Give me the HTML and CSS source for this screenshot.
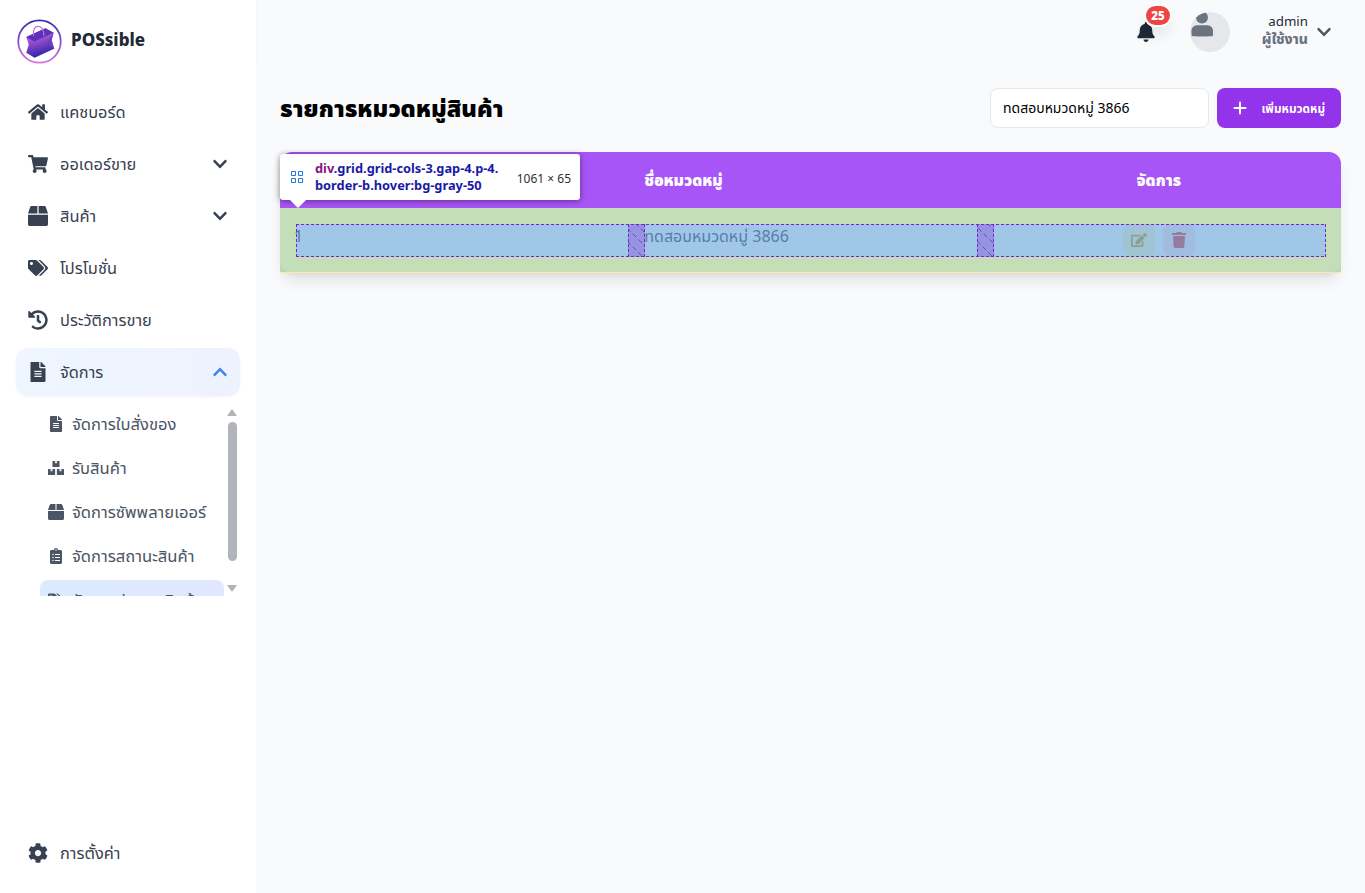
FILE: index.html
```html
<!DOCTYPE html>
<html lang="th">
<head>
<meta charset="utf-8">
<title>POSsible</title>
<link rel="stylesheet" href="styles.css">
</head>
<body>
<svg class="sprite" aria-hidden="true">
  <symbol id="home" viewBox="0 0 576 512"><path d="M280.37 148.26L96 300.11V464a16 16 0 0 0 16 16l112.06-.29a16 16 0 0 0 15.92-16V368a16 16 0 0 1 16-16h64a16 16 0 0 1 16 16v95.64a16 16 0 0 0 16 16.05L464 480a16 16 0 0 0 16-16V300L295.67 148.26a12.19 12.19 0 0 0-15.3 0zM571.6 251.47L488 182.56V44.05a12 12 0 0 0-12-12h-56a12 12 0 0 0-12 12v72.61L318.47 43a48 48 0 0 0-61 0L4.34 251.47a12 12 0 0 0-1.6 16.9l25.5 31A12 12 0 0 0 45.15 301l235.22-193.74a12.19 12.19 0 0 1 15.3 0L530.9 301a12 12 0 0 0 16.9-1.6l25.5-31a12 12 0 0 0-1.7-16.93z"/></symbol>
  <symbol id="cart" viewBox="0 0 576 512"><path d="M528.12 301.319l47.273-208C578.806 78.301 567.391 64 551.99 64H159.208l-9.166-44.81C147.758 8.021 137.93 0 126.529 0H24C10.745 0 0 10.745 0 24v16c0 13.255 10.745 24 24 24h69.883l70.248 343.435C147.325 417.1 136 435.222 136 456c0 30.928 25.072 56 56 56s56-25.072 56-56c0-15.674-6.447-29.835-16.824-40h209.647C430.447 426.165 424 440.326 424 456c0 30.928 25.072 56 56 56s56-25.072 56-56c0-22.172-12.888-41.332-31.579-50.405l5.517-24.276c3.413-15.018-8.002-29.319-23.403-29.319H218.117l-6.545-32h293.145c11.206 0 20.92-7.754 23.403-18.681z"/></symbol>
  <symbol id="box" viewBox="0 0 512 512"><path d="M509.5 184.6L458.9 32.8C452.4 13.2 434.1 0 413.4 0H272v192h238.7c-.4-2.5-.4-5-1.2-7.4zM240 0H98.6c-20.7 0-39 13.2-45.5 32.8L2.5 184.6c-.8 2.4-.8 4.9-1.2 7.4H240V0zM0 224v240c0 26.5 21.5 48 48 48h416c26.5 0 48-21.5 48-48V224H0z"/></symbol>
  <symbol id="tags" viewBox="0 0 640 512"><path d="M497.941 225.941L286.059 14.059A48 48 0 0 0 252.118 0H48C21.49 0 0 21.49 0 48v204.118a48 48 0 0 0 14.059 33.941l211.882 211.882c18.744 18.745 49.136 18.746 67.882 0l204.118-204.118c18.745-18.745 18.745-49.137 0-67.882zM112 160c-26.51 0-48-21.49-48-48s21.49-48 48-48 48 21.49 48 48-21.49 48-48 48zm513.941 133.823L421.823 497.941c-18.745 18.745-49.137 18.745-67.882 0l-.36-.36L527.64 323.522c16.999-16.999 26.36-39.6 26.36-63.64s-9.362-46.641-26.36-63.64L331.397 0h48.721a48 48 0 0 1 33.941 14.059l211.882 211.882c18.745 18.745 18.745 49.137 0 67.882z"/></symbol>
  <symbol id="history" viewBox="0 0 512 512"><path d="M504 255.531c.253 136.64-111.18 248.372-247.82 248.468-59.015.042-113.223-20.53-155.822-54.911-11.077-8.94-11.905-25.541-1.839-35.607l11.267-11.267c8.609-8.609 22.353-9.551 31.891-1.984C173.062 425.135 212.781 440 256 440c101.705 0 184-82.311 184-184 0-101.705-82.311-184-184-184-48.814 0-93.149 18.969-126.068 49.932l50.754 50.754c10.08 10.08 2.941 27.314-11.313 27.314H24c-8.837 0-16-7.163-16-16V38.627c0-14.254 17.234-21.393 27.314-11.314l49.372 49.372C129.209 34.136 189.552 8 256 8c136.81 0 247.747 110.78 248 247.531zm-180.912 78.784l9.823-12.63c8.138-10.463 6.253-25.542-4.21-33.679L288 256.349V152c0-13.255-10.745-24-24-24h-16c-13.255 0-24 10.745-24 24v135.651l65.409 50.874c10.463 8.137 25.541 6.253 33.679-4.21z"/></symbol>
  <symbol id="file" viewBox="0 0 384 512"><path d="M224 136V0H24C10.7 0 0 10.7 0 24v464c0 13.3 10.7 24 24 24h336c13.3 0 24-10.7 24-24V160H248c-13.2 0-24-10.8-24-24zm64 236c0 6.6-5.4 12-12 12H108c-6.6 0-12-5.4-12-12v-8c0-6.6 5.4-12 12-12h168c6.6 0 12 5.4 12 12v8zm0-64c0 6.6-5.4 12-12 12H108c-6.6 0-12-5.4-12-12v-8c0-6.6 5.4-12 12-12h168c6.6 0 12 5.4 12 12v8zm0-72v8c0 6.6-5.4 12-12 12H108c-6.6 0-12-5.4-12-12v-8c0-6.6 5.4-12 12-12h168c6.6 0 12 5.4 12 12zm96-114.1v6.1H256V0h6.1c6.4 0 12.5 2.5 17 7l97.9 98c4.5 4.5 7 10.6 7 16.9z"/></symbol>
  <symbol id="boxes" viewBox="0 0 576 512"><path d="M560 288h-80v96l-32-21.3-32 21.3v-96h-80c-8.8 0-16 7.2-16 16v192c0 8.8 7.2 16 16 16h224c8.8 0 16-7.2 16-16V304c0-8.8-7.2-16-16-16zm-384-64h224c8.8 0 16-7.2 16-16V16c0-8.8-7.2-16-16-16h-80v96l-32-21.3L256 96V0h-80c-8.8 0-16 7.2-16 16v192c0 8.8 7.2 16 16 16zm64 64h-80v96l-32-21.3L96 384v-96H16c-8.8 0-16 7.2-16 16v192c0 8.8 7.2 16 16 16h224c8.8 0 16-7.2 16-16V304c0-8.8-7.2-16-16-16z"/></symbol>
  <symbol id="clipboard" viewBox="0 0 384 512"><path fill-rule="evenodd" d="M336 64h-80c0-35.3-28.7-64-64-64s-64 28.7-64 64H48C21.5 64 0 85.5 0 112v352c0 26.5 21.5 48 48 48h288c26.5 0 48-21.5 48-48V112c0-26.5-21.5-48-48-48zM96 424a24 24 0 1 1 0-48 24 24 0 0 1 0 48zm0-96a24 24 0 1 1 0-48 24 24 0 0 1 0 48zm0-96a24 24 0 1 1 0-48 24 24 0 0 1 0 48zm96-192a24 24 0 1 1 0 48 24 24 0 0 1 0-48zm-32 344h160v32H160zm0-96h160v32H160zm0-96h160v32H160z"/></symbol>
  <symbol id="cog" viewBox="0 0 512 512"><path d="M487.4 315.7l-42.6-24.6c4.3-23.2 4.3-47 0-70.2l42.6-24.6c4.9-2.8 7.1-8.6 5.5-14-11.1-35.6-30-67.8-54.7-94.6-3.8-4.1-10-5.1-14.8-2.3L380.8 110c-17.9-15.4-38.5-27.3-60.8-35.1V25.8c0-5.6-3.9-10.5-9.4-11.7-36.7-8.2-74.3-7.8-109.2 0-5.5 1.2-9.4 6.1-9.4 11.7V75c-22.2 7.9-42.8 19.8-60.8 35.1L88.7 85.5c-4.9-2.8-11-1.9-14.8 2.3-24.7 26.7-43.6 58.9-54.7 94.6-1.7 5.4.6 11.2 5.5 14L67.3 221c-4.3 23.2-4.3 47 0 70.2l-42.6 24.6c-4.9 2.8-7.1 8.6-5.5 14 11.1 35.6 30 67.8 54.7 94.6 3.8 4.1 10 5.1 14.8 2.3l42.6-24.6c17.9 15.4 38.5 27.3 60.8 35.1v49.2c0 5.6 3.9 10.5 9.4 11.7 36.7 8.2 74.3 7.8 109.2 0 5.5-1.2 9.4-6.1 9.4-11.7v-49.2c22.2-7.9 42.8-19.8 60.8-35.1l42.6 24.6c4.9 2.8 11 1.9 14.8-2.3 24.7-26.7 43.6-58.9 54.7-94.6 1.5-5.5-.7-11.3-5.6-14.1zM256 336c-44.1 0-80-35.9-80-80s35.9-80 80-80 80 35.9 80 80-35.9 80-80 80z"/></symbol>
  <symbol id="bell" viewBox="0 0 448 512"><path d="M224 512c35.32 0 63.97-28.65 63.97-64H160.03c0 35.35 28.65 64 63.97 64zm215.39-149.71c-19.32-20.76-55.47-51.99-55.47-154.29 0-77.7-54.48-139.9-127.94-155.16V32c0-17.67-14.32-32-31.98-32s-31.98 14.33-31.98 32v20.84C118.56 68.1 64.08 130.3 64.08 208c0 102.3-36.15 133.53-55.47 154.29-6 6.45-8.66 14.16-8.61 21.71.11 16.4 12.98 32 32.1 32h383.8c19.12 0 32-15.6 32.1-32 .05-7.55-2.61-15.27-8.61-21.71z"/></symbol>
  <symbol id="chevron" viewBox="0 0 448 512"><path d="M207.029 381.476L12.686 187.132c-9.373-9.373-9.373-24.569 0-33.941l22.667-22.667c9.357-9.357 24.522-9.375 33.901-.04L224 284.505l154.745-154.021c9.379-9.335 24.544-9.317 33.901.04l22.667 22.667c9.373 9.373 9.373 24.569 0 33.941L240.971 381.476c-9.373 9.372-24.569 9.372-33.942 0z"/></symbol>
  <symbol id="edit" viewBox="0 0 576 512"><path d="M402.6 83.2l90.2 90.2c3.8 3.8 3.8 10 0 13.8L274.4 405.6l-92.8 10.3c-12.4 1.4-22.9-9.1-21.5-21.5l10.3-92.8L388.8 83.2c3.8-3.8 10-3.8 13.8 0zm162-22.9l-48.8-48.8c-15.2-15.2-39.9-15.2-55.2 0l-35.4 35.4c-3.8 3.8-3.8 10 0 13.8l90.2 90.2c3.8 3.8 10 3.8 13.8 0l35.4-35.4c15.2-15.3 15.2-40 0-55.2zM384 346.2V448H64V128h229.8c3.2 0 6.2-1.3 8.5-3.5l40-40c7.6-7.6 2.2-20.5-8.5-20.5H48C21.5 64 0 85.5 0 112v352c0 26.5 21.5 48 48 48h352c26.5 0 48-21.5 48-48V306.2c0-10.7-12.9-16-20.5-8.5l-40 40c-2.2 2.3-3.5 5.3-3.5 8.5z"/></symbol>
  <symbol id="trash" viewBox="0 0 448 512"><path d="M432 32H312l-9.4-18.7A24 24 0 0 0 281.1 0H166.8a23.72 23.72 0 0 0-21.4 13.3L136 32H16A16 16 0 0 0 0 48v32a16 16 0 0 0 16 16h416a16 16 0 0 0 16-16V48a16 16 0 0 0-16-16zM53.2 467a48 48 0 0 0 47.9 45h245.8a48 48 0 0 0 47.9-45L416 128H32z"/></symbol>
</svg>
<div class="app">
  <aside class="sidebar">
    <div class="brand">
      <svg class="logo" viewBox="0 0 46 46">
        <defs>
          <linearGradient id="ring" x1="0" y1="0" x2="0" y2="1"><stop offset="0" stop-color="#3b27b5"/><stop offset="1" stop-color="#d873dc"/></linearGradient>
          <linearGradient id="front" x1="0" y1="0" x2="0.25" y2="1"><stop offset="0" stop-color="#6a3cbc"/><stop offset="0.4" stop-color="#a558d0"/><stop offset="1" stop-color="#3521ae"/></linearGradient>
        </defs>
        <circle cx="23" cy="23" r="21.7" fill="#fff" stroke="url(#ring)" stroke-width="1.8"/>
        <path d="M9.500 18.500L29 9.500l8.500 4.500-2 7.500 2.500 9L18 39.500l-8.500-5L12 26z" fill="url(#front)"/>
        <path d="M9.500 18.500L29 9.500l8.500 4.500L17.500 23z" fill="#5b33b8"/>
        <path d="M37.500 14L35 22l3 8.500-8-6z" fill="#6940be"/>
        <path d="M17 17.500c-1-6 1-10 4.500-10 4 0 6 4 6 10" fill="none" stroke="#c468d6" stroke-width="1.200"/>
      </svg>
      <span class="brand-name">POSsible</span>
    </div>
    <nav class="menu">
      <a class="item"><svg class="icon"><use href="#home"/></svg><span>แคชบอร์ด</span></a>
      <a class="item"><svg class="icon"><use href="#cart"/></svg><span>ออเดอร์ขาย</span><svg class="chev"><use href="#chevron"/></svg></a>
      <a class="item"><svg class="icon"><use href="#box"/></svg><span>สินค้า</span><svg class="chev"><use href="#chevron"/></svg></a>
      <a class="item"><svg class="icon"><use href="#tags"/></svg><span>โปรโมชั่น</span></a>
      <a class="item"><svg class="icon"><use href="#history"/></svg><span>ประวัติการขาย</span></a>
      <a class="item active"><svg class="icon"><use href="#file"/></svg><span>จัดการ</span><svg class="chev up"><use href="#chevron"/></svg></a>
    </nav>
    <div class="submenu">
      <div class="sublist">
        <a class="sub"><svg class="icon-s"><use href="#file"/></svg><span>จัดการใบสั่งของ</span></a>
        <a class="sub"><svg class="icon-s"><use href="#boxes"/></svg><span>รับสินค้า</span></a>
        <a class="sub"><svg class="icon-s"><use href="#box"/></svg><span>จัดการซัพพลายเออร์</span></a>
        <a class="sub"><svg class="icon-s"><use href="#clipboard"/></svg><span>จัดการสถานะสินค้า</span></a>
        <a class="sub current"><svg class="icon-s"><use href="#tags"/></svg><span>จัดการประเภทสินค้า</span></a>
      </div>
      <div class="scroll"><i class="arrow-up"></i><i class="thumb"></i><i class="arrow-down"></i></div>
    </div>
    <a class="item settings"><svg class="icon"><use href="#cog"/></svg><span>การตั้งค่า</span></a>
  </aside>
  <div class="page">
    <header class="topbar">
      <div class="bell"><svg class="bell-icon"><use href="#bell"/></svg><span class="badge">25</span></div>
      <svg class="avatar" viewBox="0 0 40 40"><defs><clipPath id="round"><circle cx="20" cy="20" r="20"/></clipPath></defs><g clip-path="url(#round)"><rect width="40" height="40" fill="#e5e7eb"/><circle cx="12" cy="5.500" r="6" fill="#6b7280"/><rect x="1.500" y="13.200" width="21.500" height="11" rx="5.500" fill="#6b7280"/><rect x="1.500" y="18.500" width="21.500" height="5.700" rx="1.500" fill="#6b7280"/></g></svg>
      <div class="user"><span class="user-name">admin</span><span class="user-role">ผู้ใช้งาน</span></div>
      <svg class="chev gray"><use href="#chevron"/></svg>
    </header>
    <main class="content">
      <div class="heading">
        <h1>รายการหมวดหมู่สินค้า</h1>
        <div class="search">ทดสอบหมวดหมู่ 3866</div>
        <div class="add"><svg class="plus" viewBox="0 0 14 14"><path d="M7 1.500v11M1.500 7h11" fill="none" stroke="#fff" stroke-width="2" stroke-linecap="round"/></svg><span>เพิ่มหมวดหมู่</span></div>
      </div>
      <div class="table-wrap">
        <div class="table">
          <div class="row head"><span></span><span>ชื่อหมวดหมู่</span><span class="center">จัดการ</span></div>
          <div class="row"><span class="num">1</span><span>ทดสอบหมวดหมู่ 3866</span><span class="actions"><b class="btn amber"><svg class="icon-s"><use href="#edit"/></svg></b><b class="btn red"><svg class="icon-s"><use href="#trash"/></svg></b></span></div>
        </div>
        <div class="inspect">
          <svg class="lines" viewBox="0 0 1061 65">
            <defs>
              <clipPath id="gap1"><rect x="348" y="16" width="17" height="33"/></clipPath>
              <clipPath id="gap2"><rect x="697" y="16" width="17" height="33"/></clipPath>
            </defs>
            <path d="M0 0h1061v64H0zM16 16v33h1030V16z" fill="#93c47d" fill-opacity=".55" fill-rule="evenodd"/>
            <rect x="16" y="16" width="1030" height="33" fill="#6fa8dc" fill-opacity=".66"/>
            <rect y="64" width="1061" height="1" fill="#ffe599" fill-opacity=".8"/>
            <g fill="#7f20d2" fill-opacity=".3"><rect x="348" y="16" width="17" height="33"/><rect x="697" y="16" width="17" height="33"/></g>
            <g fill="none" stroke="#7f20d2" stroke-dasharray="3 2">
              <path d="M16 16.500h1030M16 48.500h1030M16.500 16v33M348.500 16v33M364.500 16v33M697.500 16v33M713.500 16v33M1045.500 16v33"/>
              <g stroke-dasharray="5 3" stroke-opacity=".8" clip-path="url(#gap1)"><path d="M355 15l14 14M347 20l24 24M347 33l20 20"/></g>
              <g stroke-dasharray="5 3" stroke-opacity=".8" clip-path="url(#gap2)"><path d="M707 15l14 14M698 20l24 24M697 33l20 20"/></g>
            </g>
          </svg>
        </div>
        <div class="tooltip">
          <svg class="grid-icon" viewBox="0 0 12 12"><path d="M.5.5h4v4h-4zM7.500.5h4v4h-4zM.5 7.500h4v4h-4zM7.500 7.500h4v4h-4z"/></svg>
          <div class="selector"><em>div</em>.grid.grid-cols-3.gap-4.p-4.<br>border-b.hover:bg-gray-50</div>
          <div class="dims">1061 × 65</div>
          <i class="tip"></i>
        </div>
      </div>
    </main>
  </div>
</div>
</body>
</html>
```
FILE: styles.css
```css
* { box-sizing: border-box; }
body { margin: 0; background: #f9fafb; font: 16px/24px "Noto Sans", "Noto Sans Thai", "Kanit", sans-serif; color: #1f2937; overflow: hidden; }
.sprite { display: none; }
svg { display: block; fill: currentColor; flex: none; }
.app { display: flex; width: 1365px; height: 893px; }
.sidebar { width: 256px; background: #fff; display: flex; flex-direction: column; padding: 0 16px; }
.brand { display: flex; align-items: center; gap: 9px; height: 80px; padding: 2px 0 0 1px; }
.logo { width: 45px; height: 45px; }
.brand-name { font-weight: 800; font-size: 17px; margin-top: -2px; }
.menu { display: flex; flex-direction: column; gap: 4px; padding-top: 8px; }
.item { display: flex; align-items: center; gap: 12px; height: 48px; padding: 0 12px; color: #374151; white-space: nowrap; border-radius: 12px; font-size: 16.4px; }
.item .chev { margin-left: auto; margin-right: 1px; }
.icon { width: 20px; height: 20px; }
.icon-s { width: 16px; height: 16px; }
.chev { width: 14px; height: 16px; }
.up { transform: rotate(180deg); color: #3b82f6; }
.active { background: linear-gradient(to right, #eff6ff, #eef2ff); box-shadow: 0 1px 2px rgba(0,0,0,.05); }
.submenu { display: flex; justify-content: space-between; height: 196px; margin: 4px 0 0 24px; padding-top: 4px; overflow: hidden; }
.sublist { width: 185px; display: flex; flex-direction: column; gap: 4px; overflow: hidden; }
.sub { flex: none; display: flex; align-items: center; gap: 8px; height: 40px; padding: 0 8px; color: #4b5563; white-space: nowrap; border-radius: 8px; font-size: 16.6px; }
.current { background: linear-gradient(to right, #dbeafe, #e0e7ff); }
.scroll { width: 16px; display: flex; flex-direction: column; align-items: center; padding-top: 5px; margin-right: 0; }
.arrow-up { border: 5px solid transparent; border-top-width: 0; border-bottom: 7px solid #b1b4b9; }
.arrow-down { border: 5px solid transparent; border-bottom-width: 0; border-top: 7px solid #b1b4b9; margin-top: 24px; }
.thumb { width: 9px; height: 139px; border-radius: 5px; background: #b1b4b9; margin-top: 6px; }
.settings { margin-top: auto; margin-bottom: 16px; }
.page { flex: 1; }
.topbar { height: 64px; display: flex; align-items: center; padding-right: 34px; justify-content: flex-end; box-shadow: inset 2px 0 2px rgba(0,0,0,.02); }
.bell { position: relative; margin-right: 35px; }
.bell-icon { width: 18px; height: 20px; }
.badge { position: absolute; left: 7px; top: -18px; width: 28px; height: 23px; border: 2px solid #fff; border-radius: 12px; background: #ef4444; color: #fff; font: 900 11.5px/19px "Noto Sans", sans-serif; text-align: center; box-shadow: 0 10px 15px -3px rgba(0,0,0,.1); }
.avatar { width: 40px; height: 40px; margin-right: 32px; }
.user { width: 46px; display: flex; flex-direction: column; align-items: flex-end; margin-right: 9px; font-size: 14px; line-height: 17px; margin-top: -5px; white-space: nowrap; }
.user-name { font-size: 13.3px; }
.user-role { color: #6b7280; font-weight: 800; }
.gray { color: #4b5563; }
.content { padding: 24px; }
.heading { display: flex; align-items: center; height: 40px; gap: 8px; }
h1 { margin: 0 auto 0 0; color: #000; font-size: 23.6px; line-height: 32px; font-weight: 900; white-space: nowrap; }
.search { width: 219px; height: 40px; border: 1px solid #e5e7eb; border-radius: 8px; background: #fff; padding: 0 12px; font-size: 14px; line-height: 38px; color: #000; white-space: nowrap; }
.add { width: 124px; height: 40px; border-radius: 8px; background: #9333ea; color: #fff; display: flex; align-items: center; justify-content: space-between; padding: 0 16px; font-size: 11.8px; font-weight: 700; white-space: nowrap; }
.plus { width: 14px; height: 14px; }
.table-wrap { position: relative; margin-top: 24px; }
.table { border-radius: 12px; overflow: hidden; background: #fff; box-shadow: 0 10px 15px -3px rgba(0,0,0,.1), 0 4px 6px -4px rgba(0,0,0,.1); }
.row { display: grid; grid-template-columns: repeat(3, 1fr); gap: 16px; padding: 16px; height: 65px; }
.head { height: 56px; background: #a855f7; color: #fff; font-weight: 900; font-size: 15.6px; }
.num { margin-left: -2px; }
.center { text-align: center; }
.actions { display: flex; justify-content: center; gap: 8px; }
.btn { width: 32px; height: 32px; border-radius: 8px; display: grid; place-items: center; }
.amber { background: #fef9c3; color: #ca8a04; }
.red { background: #fee2e2; color: #dc2626; }
.inspect { position: absolute; left: 0; top: 56px; width: 1061px; height: 65px; }
.lines { width: 1061px; height: 65px; }
.tooltip { position: absolute; left: 0; top: 2px; width: 300px; height: 46px; background: #fff; border-radius: 3px; box-shadow: 0 1px 6px rgba(0,0,0,.45); display: flex; align-items: center; padding: 0 9px 0 11px; font: 12px/17px "Noto Sans", sans-serif; color: #303030; white-space: nowrap; }
.grid-icon { width: 12px; height: 12px; margin-right: 12px; fill: none; stroke: #1a73e8; }
.selector { color: #1a1aa6; font-weight: 700; font-size: 12.8px; margin-top: 0; }
.selector em { color: #881280; font-style: normal; }
.dims { margin-left: auto; margin-top: 2px; }
.tip { position: absolute; left: 10px; top: 46px; border: 8px solid transparent; border-top-color: #fff; border-bottom: 0; }
```
